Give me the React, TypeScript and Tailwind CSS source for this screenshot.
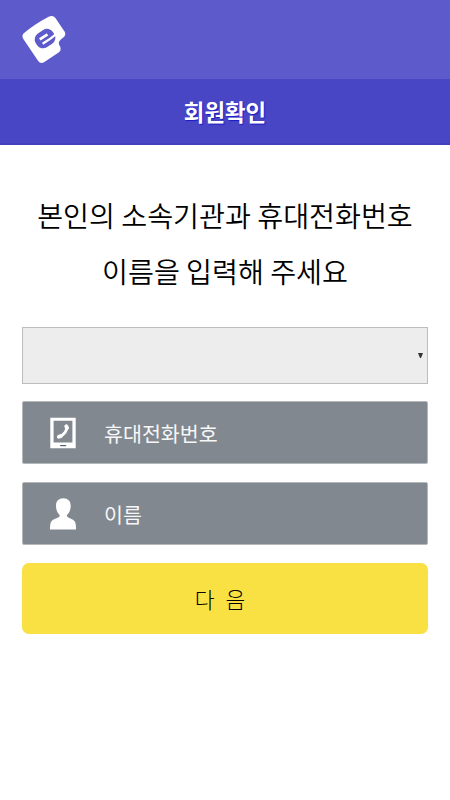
import React, { useState } from "react";

function LogoIcon() {
  return (
    <svg className="block h-[50px] w-[44px]" viewBox="0 0 44 50" fill="none">
      <path
        d="M1.5 18.5Q-.6 21 1.5 24.3L16.2 46Q18.5 49.2 22 47.2L37 37.3Q39.4 35.4 38.3 32Q35.8 28.2 37.4 26.2Q38.4 24.8 41 22.8Q44.6 20.2 42.7 16.8L33.4 3Q31-.4 26.6 1.8Q12.5 9.3 1.5 18.5Z"
        fill="#fff"
      />
      <g transform="translate(23 23.6) rotate(-33)">
        <rect x="-10.2" y="-8.2" width="20.4" height="16.4" rx="7" fill="#5d5acb" />
        <path d="M-4.8-2.2H4.4" stroke="#fff" strokeWidth="2.8" />
        <path d="M-4.8 3H4.5L11 2.4" stroke="#fff" strokeWidth="2.3" />
      </g>
    </svg>
  );
}

function PhoneIcon() {
  return (
    <svg className="block h-[32px] w-[26px]" viewBox="0 0 26 32">
      <path fill="#fff" fillRule="evenodd" d="M.3 .7H25.7V31.3H.3ZM3.6 3.8V25.5H22.4V3.8Z" />
      <path d="M10.2 28.6h6" stroke="#4f6176" strokeWidth="1.2" />
      <path
        d="M16.6 9.2C17.3 13.5 14.2 18 9.6 19.3"
        fill="none"
        stroke="#fff"
        strokeWidth="2.8"
      />
      <path
        d="M16.2 9.3L17.1 10.9M8.8 19.8L10.8 19.1"
        stroke="#fff"
        strokeWidth="3.8"
        strokeLinecap="round"
      />
    </svg>
  );
}

function UserIcon() {
  return (
    <svg className="block h-[32px] w-[26px]" viewBox="0 0 26 32" fill="#fff">
      <path d="M13.3.3C8.7.3 6 3.2 6 7.7C6 11.7 7.3 14.9 9.6 17V18.2C8.3 20 3.6 20.9 1.7 22.9C.1 24.6 0 28 0 31.5H26C26 28 26 24.6 24.4 22.9C22.5 20.9 18.2 20 17 18.2V17C19.4 14.9 20.7 11.7 20.7 7.7C20.7 3.2 17.9.3 13.3.3Z" />
    </svg>
  );
}

type FieldProps = {
  icon: React.ReactNode;
  label: string;
  type: string;
};

function Field({ icon, label, type }: FieldProps) {
  const [value, setValue] = useState("");

  return (
    <label className="flex h-[63px] w-full items-center rounded-[2px] border border-[#b5b8bb] bg-[#81888f] pl-[27px]">
      {icon}
      <input
        type={type}
        placeholder={label}
        aria-label={label}
        value={value}
        onChange={(e) => setValue(e.target.value)}
        className="ml-[28px] h-full min-w-0 flex-1 bg-transparent text-[20.6px] text-white outline-none placeholder:text-[#f7f7f7]"
      />
    </label>
  );
}

export default function App() {
  return (
    <div className="min-h-screen w-full bg-white font-['Noto_Sans_CJK_KR',sans-serif] text-black">
      <header className="h-[79px] bg-[#5d5acb] pt-[15px] pl-[22px]">
        <LogoIcon />
      </header>
      <div className="flex h-[66px] items-center justify-center border-b-2 border-[#4340bd] bg-[#4946c5] pt-[2px]">
        <h1 className="text-[22.4px] font-bold text-white [text-shadow:1px_1px_1px_#1b18c5]">회원확인</h1>
      </div>
      <main className="px-[22px] pt-[42px]">
        <p className="text-center text-[28.2px] leading-[56px] font-[350] whitespace-nowrap">
          본인의 소속기관과 휴대전화번호
          <br />
          이름을 입력해 주세요
        </p>
        <form className="mt-[28px] flex flex-col" onSubmit={(e) => e.preventDefault()}>
          <button
            type="button"
            aria-label="소속기관"
            className="flex h-[57px] w-full items-center justify-end border border-[#bdbdbd] bg-[#ededed] pr-[4px]"
          >
            <svg className="h-[5px] w-[5px]" viewBox="0 0 5 5">
              <path d="M0 0H5L3 5H2Z" fill="#333" />
            </svg>
          </button>
          <div className="mt-[17px] flex flex-col gap-[18px]">
            <Field icon={<PhoneIcon />} label="휴대전화번호" type="tel" />
            <Field icon={<UserIcon />} label="이름" type="text" />
            <button
              type="submit"
              className="h-[71px] w-full rounded-[7px] bg-[#fae143] pt-px pr-[7px] text-[21.5px] font-light tracking-[3px] whitespace-pre"
            >
              다 음
            </button>
          </div>
        </form>
      </main>
    </div>
  );
}
